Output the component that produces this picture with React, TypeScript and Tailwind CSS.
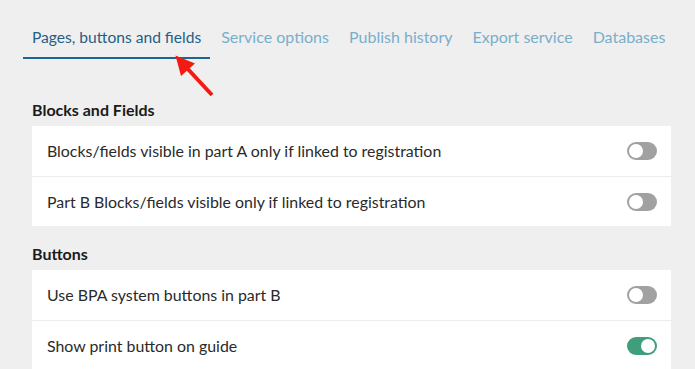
import React from "react";

const tabs = [
  "Pages, buttons and fields",
  "Service options",
  "Publish history",
  "Export service",
  "Databases",
];

function Toggle({ on }: { on: boolean }) {
  return (
    <div
      className={
        "flex h-[18px] w-[30px] items-center rounded-full px-[2px] " +
        (on ? "justify-end bg-[#3f9f7c]" : "justify-start bg-[#a1a1a1]")
      }
    >
      <div className="h-[14px] w-[14px] rounded-full bg-white" />
    </div>
  );
}

function Row({ label, on, first }: { label: string; on: boolean; first?: boolean }) {
  return (
    <div
      className={
        "flex h-[50px] items-center justify-between pl-[15px] pr-[14px] " +
        (first ? "" : "border-t border-[#ececec]")
      }
    >
      <span className="text-[15.9px] text-[#2a2a2a]">{label}</span>
      <Toggle on={on} />
    </div>
  );
}

export default function App() {
  return (
    <div
      className="relative h-[369px] w-[695px] overflow-hidden bg-[#efefef]"
      style={{ fontFamily: "Lato, 'Open Sans', sans-serif" }}
    >
      <div className="flex gap-[2px] pl-[23px] pt-[25px]">
        {tabs.map((t, i) => (
          <div
            key={t}
            className={
              "whitespace-nowrap px-[9px] pb-2 leading-6 " +
              (i === 0
                ? "border-b-2 border-[#1d6595] text-[15.6px] text-[#235f88]"
                : "border-b-2 border-transparent text-[16px] text-[#79aecb]")
            }
          >
            {t}
          </div>
        ))}
      </div>

      <div className="pl-[32px] pr-[24px]">
        <h2 className="mt-[39px] text-[16px] font-bold leading-6 text-[#1a1a1a]">
          Blocks and Fields
        </h2>
        <div className="mt-1 bg-white">
          <Row first label="Blocks/fields visible in part A only if linked to registration" on={false} />
          <Row label="Part B Blocks/fields visible only if linked to registration" on={false} />
        </div>

        <h2 className="mt-[16px] text-[16px] font-bold leading-6 text-[#1a1a1a]">Buttons</h2>
        <div className="mt-1 bg-white">
          <Row first label="Use BPA system buttons in part B" on={false} />
          <Row label="Show print button on guide" on={true} />
        </div>
      </div>

      <svg
        className="pointer-events-none absolute left-0 top-0"
        width="695"
        height="369"
        viewBox="0 0 695 369"
      >
        <line x1="212" y1="95" x2="186" y2="67" stroke="#f41a14" strokeWidth="4" strokeLinecap="butt" />
        <polygon points="175.5,55.5 195,63.5 181,76" fill="#f41a14" />
      </svg>
    </div>
  );
}
